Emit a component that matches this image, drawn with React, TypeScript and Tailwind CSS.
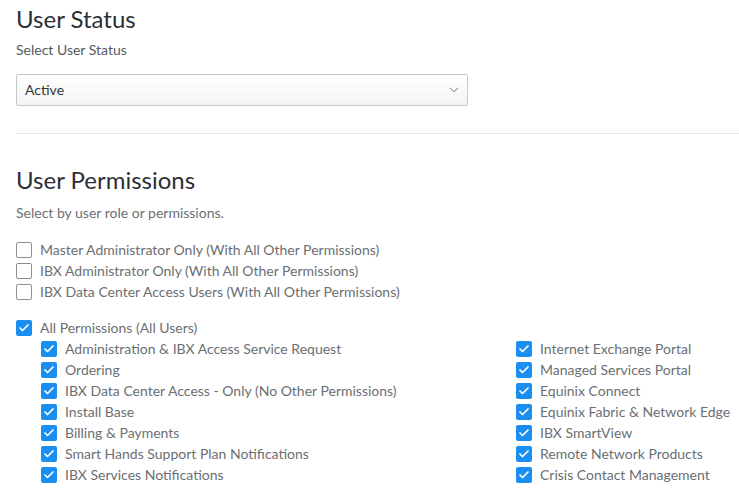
import { ChevronDown, Check } from 'lucide-react';

const leftPerms = [
  'Administration & IBX Access Service Request',
  'Ordering',
  'IBX Data Center Access - Only (No Other Permissions)',
  'Install Base',
  'Billing & Payments',
  'Smart Hands Support Plan Notifications',
  'IBX Services Notifications',
];

const rightPerms = [
  'Internet Exchange Portal',
  'Managed Services Portal',
  'Equinix Connect',
  'Equinix Fabric & Network Edge',
  'IBX SmartView',
  'Remote Network Products',
  'Crisis Contact Management',
];

const roles = [
  'Master Administrator Only (With All Other Permissions)',
  'IBX Administrator Only (With All Other Permissions)',
  'IBX Data Center Access Users (With All Other Permissions)',
];

function Box({ checked }: { checked: boolean }) {
  if (checked) {
    return (
      <span className="w-4 h-4 rounded-[2px] bg-[#1b8ef2] flex items-center justify-center shrink-0">
        <Check size={12} strokeWidth={3.5} color="#fff" />
      </span>
    );
  }
  return <span className="w-4 h-4 rounded-[2px] border border-[#8a8f94] bg-white shrink-0" />;
}

function Row({ label, checked }: { label: string; checked: boolean }) {
  return (
    <label className="flex items-center gap-2 h-[21px]">
      <Box checked={checked} />
      <span className="text-[14px] text-[#6b6f73] leading-none">{label}</span>
    </label>
  );
}

export default function App() {
  return (
    <div className="w-[739px] h-[491px] overflow-hidden bg-white font-['Lato',sans-serif] pl-4">
      {/* user status */}
      <h2 className="text-[24px] text-[#2c3036] leading-none pt-[7px]">User Status</h2>
      <p className="text-[14px] text-[#555a5f] mt-[12px] leading-none">Select User Status</p>
      <div className="mt-[17px] w-[452px] h-[32px] border border-[#c5c9cd] rounded-[2px] bg-gradient-to-b from-white to-[#f4f4f4] flex items-center justify-between pl-2 pr-[6px]">
        <span className="text-[14px] text-[#33373b] leading-none">Active</span>
        <ChevronDown size={14} strokeWidth={1.5} color="#55595d" />
      </div>

      <div className="mt-[27px] border-t border-[#e6e7e8]" />

      {/* user permissions */}
      <h2 className="text-[24px] text-[#2c3036] leading-none mt-[34px]">User Permissions</h2>
      <p className="text-[14px] text-[#6b6f73] mt-[14px] leading-none">Select by user role or permissions.</p>

      <div className="mt-[19px] flex flex-col">
        {roles.map((r) => (
          <Row key={r} label={r} checked={false} />
        ))}
      </div>

      <div className="mt-[15px]">
        <Row label="All Permissions (All Users)" checked />
        <div className="pl-[25px] flex">
          <div className="w-[475px] flex flex-col">
            {leftPerms.map((p) => (
              <Row key={p} label={p} checked />
            ))}
          </div>
          <div className="flex flex-col">
            {rightPerms.map((p) => (
              <Row key={p} label={p} checked />
            ))}
          </div>
        </div>
      </div>
    </div>
  );
}
